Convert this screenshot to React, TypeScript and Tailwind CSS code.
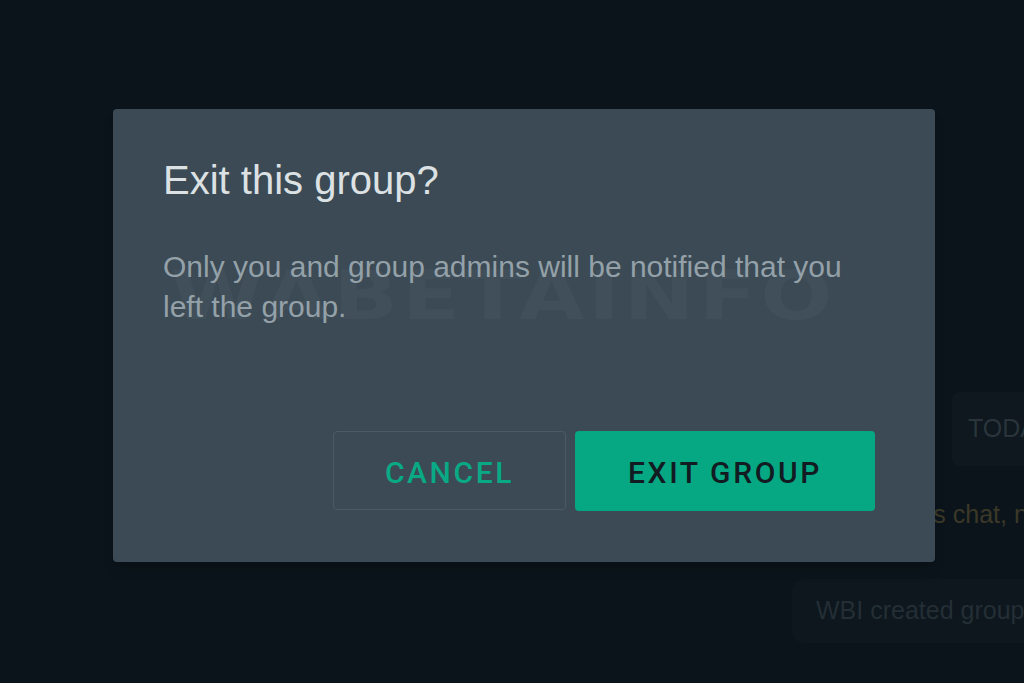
import React from 'react';

const sans = { fontFamily: '"Liberation Sans", Arial, sans-serif' };

export default function App() {
  return (
    <div className="relative h-[683px] w-[1024px] overflow-hidden bg-[#0b141a]" style={sans}>
      {/* chat behind the dialog */}
      <div className="flex flex-col pt-[392px] whitespace-nowrap">
        <div className="ml-[952px] flex h-[74px] w-[140px] items-center rounded-lg bg-[#0e181e] pl-4 text-[25px] text-[#29343b]">
          TODAY
        </div>
        <div className="ml-[704px] mt-[36px] text-[25px] leading-none text-[#3b3828]">
          No one outside of this chat, not even WhatsApp, can read them.
        </div>
        <div className="ml-[792px] mt-[52px] flex h-[64px] w-[320px] items-center rounded-xl bg-[#0d171d] pl-6 text-[25px] text-[#242e35]">
          WBI created group "WABetaInfo"
        </div>
      </div>

      {/* dialog */}
      <div className="absolute left-[113px] top-[109px] flex h-[453px] w-[822px] flex-col rounded-[4px] bg-[#3b4a54] pb-[51px] pl-[50px] pr-[60px] pt-[49px] shadow-lg">
        <div
          className="pointer-events-none absolute left-[57px] top-[153px] origin-left scale-x-125 select-none text-[68px] font-black leading-none tracking-[3px] text-[#404f59]"
          style={{ fontFamily: '"DejaVu Sans", sans-serif' }}
        >
          WABETAINFO
        </div>
        <h2 className="relative text-[40px] leading-[44px] text-[#dce1e4]">Exit this group?</h2>
        <p className="relative mt-[45px] text-[30px] leading-[40px] text-[#94a1a9]">
          Only you and group admins will be notified that you
          <br />
          left the group.
        </p>
        <div className="relative mt-auto flex justify-end gap-[9px]" style={{ fontFamily: 'Roboto, sans-serif' }}>
          <button className="flex h-[79px] w-[233px] items-center justify-center rounded-[4px] border border-[#4b5a64] pt-[3px] text-[30px] font-medium tracking-[0.087em] text-[#0aa985]">
            CANCEL
          </button>
          <button className="flex h-[80px] w-[300px] items-center justify-center rounded-[4px] bg-[#06a883] pt-[3px] text-[30px] font-medium tracking-[0.087em] text-[#111b21]">
            EXIT GROUP
          </button>
        </div>
      </div>
    </div>
  );
}
